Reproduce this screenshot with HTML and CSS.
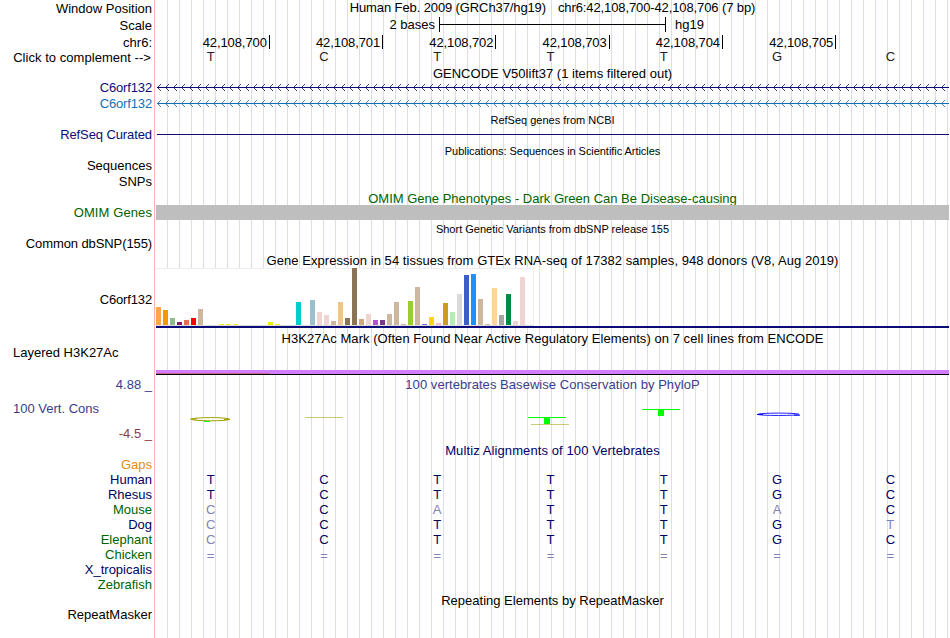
FILE: index.html
```
<!DOCTYPE html>
<html lang="en">
<head>
  <meta charset="UTF-8" />
  <meta name="viewport" content="width=device-width, initial-scale=1.0"/>
  <title>Human chr6:42,108,700-42,108,706 Genome Browser</title>
  <link rel="stylesheet" href="styles.css">
</head>
<body>

  <div class="browser">
    <!-- Ruler -->
    <div class="row h17"><div class="label">Window Position</div><div class="title position up"><span>Human Feb. 2009 (GRCh37/hg19)</span><span>chr6:42,108,700-42,108,706 (7 bp)</span></div></div>
    <div class="row h17"><div class="label">Scale</div><div class="scale"><span class="bases">2 bases</span><div class="scale-bar"></div><span>hg19</span></div></div>
    <div class="row h17"><div class="label">chr6:</div>
      <div class="cells ticks"><span>42,108,700</span><span>42,108,701</span><span>42,108,702</span><span>42,108,703</span><span>42,108,704</span><span>42,108,705</span></div>
    </div>
    <div class="row h14"><div class="label complement up">Click to complement --&gt;</div><div class="cells seq dna" data-seq="TCTTTGC"></div></div>

    <!-- Genes -->
    <div class="row h15"><div class="title gencode down">GENCODE V50lift37 (1 items filtered out)</div></div>
    <div class="row h16"><div class="label gene-name navy up">C6orf132</div><svg class="gene navy" width="793" height="7"></svg></div>
    <div class="row h16"><div class="label gene-name blue up">C6orf132</div><svg class="gene blue" width="793" height="7"></svg></div>
    <div class="row h15"><div class="title small down">RefSeq genes from NCBI</div></div>
    <div class="row h15"><div class="label tight navy">RefSeq Curated</div><div class="refseq"></div></div>
    <div class="row h16"><div class="title small pubs down">Publications: Sequences in Scientific Articles</div></div>
    <div class="row h16"><div class="label up">Sequences</div></div>
    <div class="row h16"><div class="label up">SNPs</div></div>
    <div class="row h15"><div class="title green omim down">OMIM Gene Phenotypes - Dark Green Can Be Disease-causing</div></div>
    <div class="row h15"><div class="label green wide">OMIM Genes</div><div class="omim-bar"></div></div>
    <div class="row h16"><div class="title small snp down">Short Genetic Variants from dbSNP release 155</div></div>
    <div class="row h16"><div class="label tight up">Common dbSNP(155)</div></div>

    <!-- Expression -->
    <div class="row h16"><div class="title gtex">Gene Expression in 54 tissues from GTEx RNA-seq of 17382 samples, 948 donors (V8, Aug 2019)</div></div>
    <div class="row h60"><div class="label gene-name down">C6orf132</div><div class="expression"><div class="bars" id="bars"></div></div></div>
    <div class="row h17"><div class="title h3k down">H3K27Ac Mark (Often Found Near Active Regulatory Elements) on 7 cell lines from ENCODE</div></div>
    <div class="row h31"><div class="label left">Layered H3K27Ac</div><div class="signal"></div></div>

    <!-- Conservation -->
    <div class="row h16"><div class="label slate">4.88 _</div><div class="title slate phylop">100 vertebrates Basewise Conservation by PhyloP</div></div>
    <div class="row h51">
      <div class="cons-labels"><span class="slate">100 Vert. Cons</span><span class="maroon">-4.5 _</span></div>
      <svg class="wiggle" width="793" height="51" viewBox="156 392 793 51">
        <g fill="none" stroke="#a0a000">
          <ellipse cx="210.5" cy="419.2" rx="19" ry="1.6" fill="#fff"/>
          <path d="M190 419h7M224 419.5h6"/>
          <path class="faint" d="M305 417.5h38M531 424.5h38"/>
        </g>
        <path d="M204 421.5h6M528 417.5h38M642 409.5h38" stroke="#0f0"/>
        <path d="M544 417h6v7h-6zM658 409h6v7h-6z" fill="#0f0"/>
        <ellipse cx="778.5" cy="414.3" rx="20.5" ry="1.2" fill="#fff" stroke="#22f"/>
        <path d="M757 414.5h6M794 415.2h6" stroke="#00f"/>
      </svg>
    </div>

    <!-- Alignments -->
    <div class="row h15"><div class="title dark multiz">Multiz Alignments of 100 Vertebrates</div></div>
    <div class="row h15"><div class="label orange up">Gaps</div></div>
    <div class="row h15"><div class="label dark up">Human</div><div class="cells seq up" data-seq="TCTTTGC"></div></div>
    <div class="row h15"><div class="label dark up">Rhesus</div><div class="cells seq up" data-seq="TCTTTGC"></div></div>
    <div class="row h15"><div class="label green up">Mouse</div><div class="cells seq up" data-seq="cCaTTaC"></div></div>
    <div class="row h15"><div class="label dark up">Dog</div><div class="cells seq up" data-seq="cCTTTGt"></div></div>
    <div class="row h15"><div class="label green up">Elephant</div><div class="cells seq up" data-seq="cCTTTGC"></div></div>
    <div class="row h15"><div class="label green up">Chicken</div><div class="cells seq" data-seq="======="></div></div>
    <div class="row h15"><div class="label dark up">X_tropicalis</div></div>
    <div class="row h15"><div class="label green up">Zebrafish</div></div>
    <div class="row h15"><div class="title repeat">Repeating Elements by RepeatMasker</div></div>
    <div class="row h15"><div class="label up">RepeatMasker</div></div>
  </div>

  <script>
    // bases, lower case = differs from human
    document.querySelectorAll('.seq').forEach(el => {
      for (const c of el.dataset.seq) {
        const base = document.createElement('span');
        base.textContent = c.toUpperCase();
        if (c !== c.toUpperCase() || c === '=') base.className = 'mismatch';
        el.appendChild(base);
      }
    });

    // strand arrows
    document.querySelectorAll('.gene').forEach(svg => {
      let d = '';
      for (let x = 1; x < 790; x += 8) d += `M${x + 4} 0L${x + 0.5} 3.5L${x + 4} 7`;
      svg.innerHTML = `<path d="M1 3.5H793"/><path class="arrows" d="${d}"/>`;
    });

    // [height, colour] per tissue
    const tissues = [
      [18, '#ffa54f'], [15, '#ee9a00'], [7, '#8fbc8f'], [3, '#8b1c62'], [5, '#ee6a50'], [7, '#ff0000'],
      [16, '#cdb79e'], [0, '#eeee00'], [0, '#eeee00'], [1, '#eeee00'], [1, '#eeee00'], [1, '#eeee00'],
      [0, '#eeee00'], [0, '#eeee00'], [0, '#eeee00'], [0, '#eeee00'], [3, '#eeee00'], [1, '#eeee00'],
      [0, '#eeee00'], [0, '#eeee00'], [23, '#00cdcd'], [0, '#ee82ee'], [25, '#9ac0cd'], [13, '#eed5d2'],
      [10, '#eed5d2'], [4, '#cdb79e'], [23, '#eec591'], [7, '#8b7355'], [57, '#8b7355'], [6, '#cdaa7d'],
      [11, '#eed5d2'], [5, '#b452cd'], [5, '#7a378b'], [11, '#cdb79e'], [23, '#cdb79e'], [1, '#cdb79e'],
      [24, '#9acd32'], [38, '#cdb79e'], [1, '#7a67ee'], [8, '#ffd700'], [2, '#ffb6c1'], [22, '#cd9b1d'],
      [13, '#b4eeb4'], [31, '#d9d9d9'], [50, '#3a5fcd'], [51, '#1e90ff'], [26, '#cdb79e'], [1, '#cdb79e'],
      [37, '#ffd39b'], [10, '#a6a6a6'], [31, '#008b45'], [4, '#eed5d2'], [48, '#eed5d2'], [0, '#ff00ff']
    ];
    document.getElementById('bars').innerHTML = tissues
      .map(([h, color]) => `<i style="height:${h}px;background:${color}"></i>`).join('');
  </script>

</body>
</html>
```
FILE: styles.css
```
:root {
  --navy: #0c0c78;
  --dark: #000064;
  --blue: #1470b4;
  --green: #006400;
  --slate: #3c3c8c;
  --maroon: #8c3c3c;
  --guide: #dcdcf8;
}

* {
  box-sizing: border-box;
  margin: 0;
  padding: 0;
}

body {
  width: 950px;
  height: 638px;
  overflow: hidden;
  background: #fff;
  color: #000;
  font-family: "Liberation Sans", Arial, sans-serif;
  font-size: 13px;
  line-height: 15px;
  white-space: nowrap;
}

.browser {
  height: 638px;
  background:
    linear-gradient(#ffb4b4, #ffb4b4) 154px 0 / 1px 100% no-repeat,
    repeating-linear-gradient(90deg, transparent 0 11px, var(--guide) 11px 12px) 156px 0 / 794px 100% no-repeat;
}

.row {
  display: grid;
  grid-template-columns: 152px 793px;
  column-gap: 4px;
  align-items: center;
}

.row > :not(.label):not(.cons-labels) { grid-column: 2; }

.h14 { height: 14px; }
.h15 { height: 15px; }
.h16 { height: 16px; }
.h17 { height: 17px; }
.h31 { height: 31px; }
.h51 { height: 51px; }
.h60 { height: 60px; }

.label { text-align: right; }
.label.left { text-align: left; padding-left: 13px; align-self: start; }
.title { text-align: center; }
.small { font-size: 11px; }

/* baseline nudges */
.up { line-height: 13px; padding-bottom: 2px; }
.down { line-height: 13px; padding-top: 2px; }

.navy { color: var(--navy); }
.dark { color: var(--dark); }
.blue { color: var(--blue); }
.green { color: var(--green); }
.slate { color: var(--slate); }
.maroon { color: var(--maroon); }
.orange { color: #e68c14; }

/* tracking */
.tight { letter-spacing: -.1px; }
.wide { letter-spacing: .1px; }
.gene-name { letter-spacing: -.15px; }
.complement { letter-spacing: .04px; padding-right: 1px; }
.gtex, .h3k { letter-spacing: .05px; }
.h3k { padding-top: 4px; }
.phylop { letter-spacing: .05px; }
.multiz { letter-spacing: .1px; }
.gencode { letter-spacing: .02px; }
.pubs { letter-spacing: -.05px; }

.position {
  display: flex;
  justify-content: center;
  gap: 12px;
  letter-spacing: -.11px;
}

.scale {
  display: grid;
  grid-template-columns: 283px 227px auto;
  align-items: center;
  align-self: start;
}

.bases { text-align: right; padding-right: 4px; }
.scale span:last-child { padding-left: 9px; }

.scale-bar {
  height: 15px;
  border: solid #000;
  border-width: 0 1px;
  background: linear-gradient(#000, #000) 0 7px / 100% 1px no-repeat;
}

.cells {
  display: grid;
  grid-template-columns: repeat(7, 1fr);
}

.ticks {
  align-self: start;
  padding-top: 1px;
  margin-left: -.5px;
  margin-right: .5px;
}

.ticks span {
  height: 14px;
  line-height: 15px;
  letter-spacing: -.1px;
  text-align: right;
  padding-right: 2px;
  border-right: 1px solid #000;
  margin-right: -1px;
}

.seq {
  color: var(--dark);
  text-align: center;
  margin-left: -2px;
  margin-right: 2px;
}

.dna {
  color: #222;
  line-height: 10px;
  padding-bottom: 4px;
}

.mismatch { color: #8282b4; }

.gene {
  display: block;
  align-self: start;
  margin-top: 4px;
}

.gene path {
  fill: none;
  stroke: currentColor;
}

.gene .arrows { opacity: .8; }

.refseq {
  height: 1px;
  margin-left: 1px;
  background: var(--navy);
}

.omim-bar {
  height: 15px;
  background: #bebebe;
}

.expression {
  height: 60px;
  border-bottom: 2px solid var(--navy);
}

.bars {
  display: flex;
  align-items: flex-end;
  gap: 2px;
  width: 378px;
  height: 58px;
  background: #fff;
  border: solid #eee;
  border-width: 1px 1px 0 0;
  border-bottom: 1px solid #ddd;
}

.bars i { width: 5px; flex: none; }

.signal {
  height: 5px;
  align-self: end;
  margin-bottom: 1px;
  border-bottom: 1px solid #000;
  background: linear-gradient(#c86496, #c86496) 0 3px / 113px 1px no-repeat, #d27dff;
}

.cons-labels {
  display: flex;
  flex-direction: column;
  justify-content: space-between;
  height: 51px;
  padding: 9px 0 2px 13px;
}

.cons-labels .maroon { align-self: flex-end; }

.faint { opacity: .55; }
```
